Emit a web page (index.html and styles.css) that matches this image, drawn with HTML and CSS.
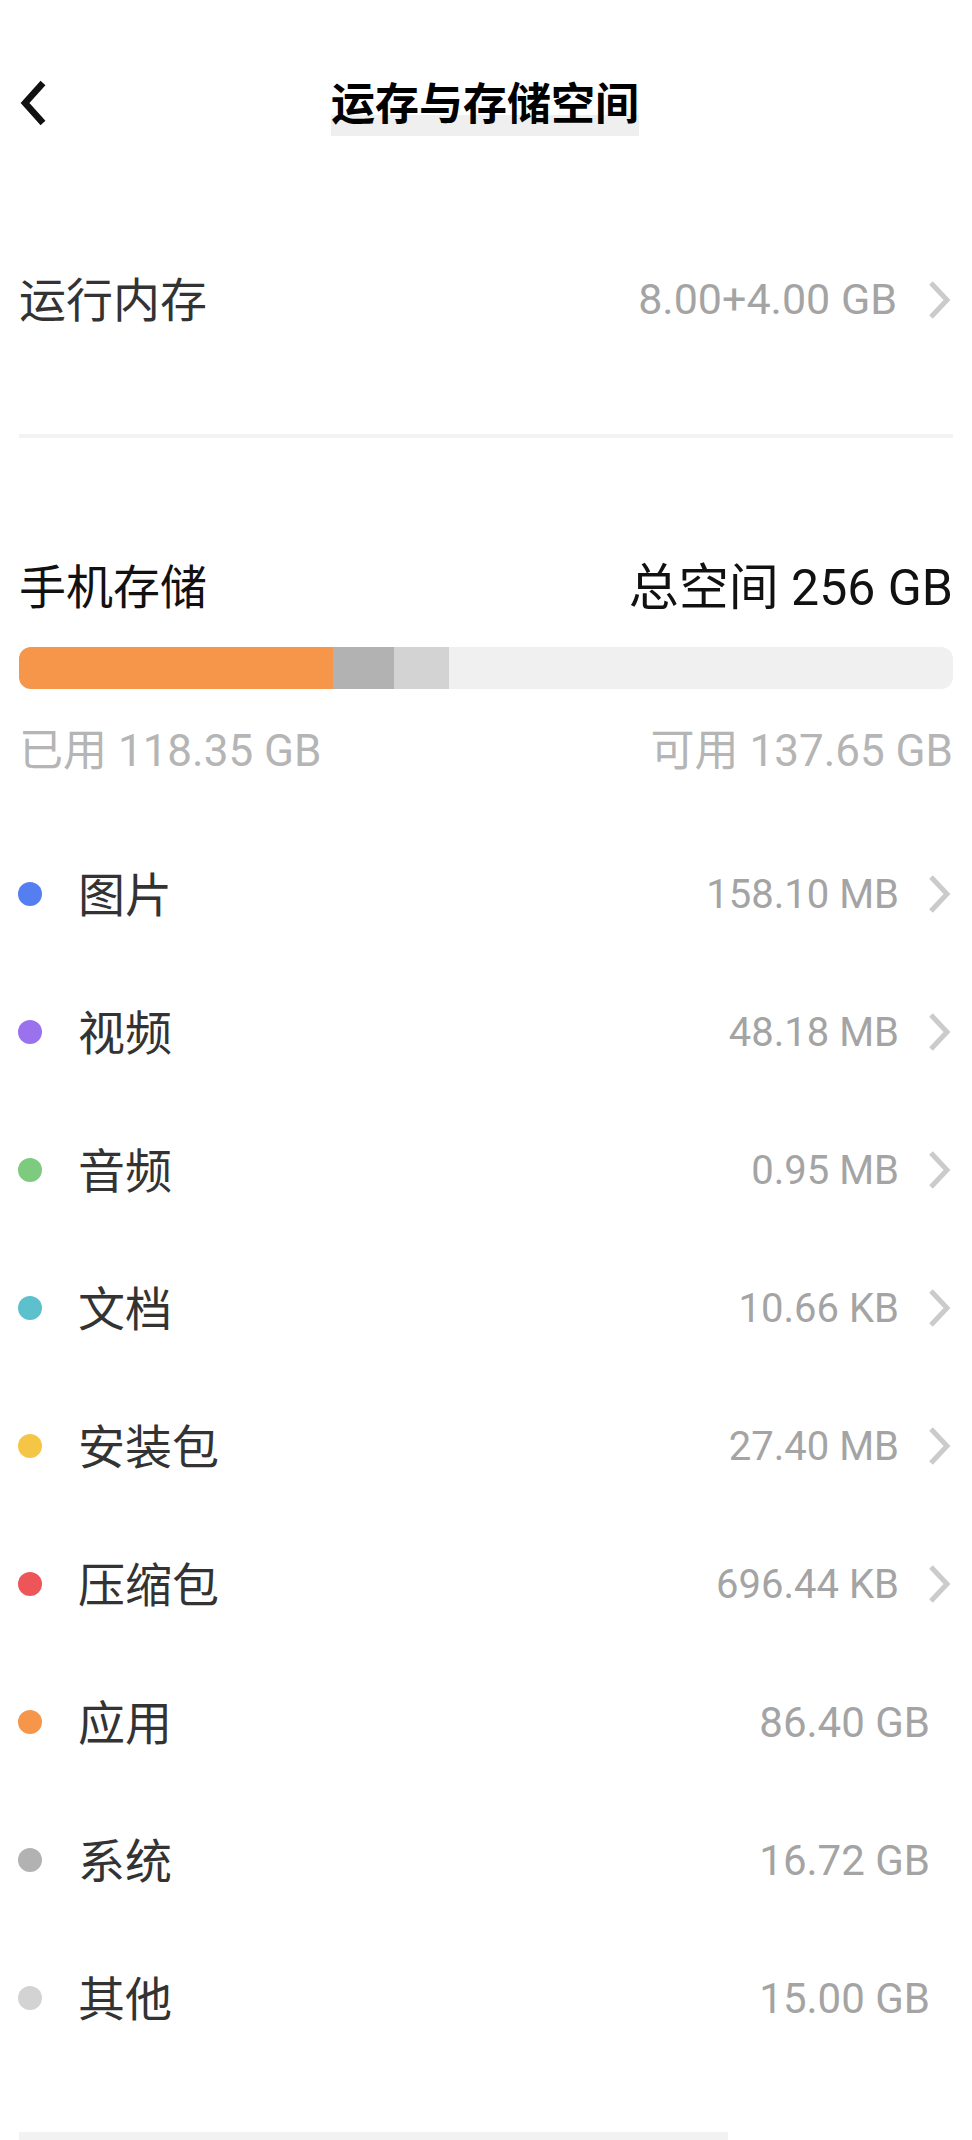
FILE: index.html
```html
<!DOCTYPE html>
<html lang="zh-CN">
  <head>
    <meta charset="utf-8" />
    <title>运存与存储空间</title>
    <link rel="stylesheet" href="styles.css">
  </head>
  <body>
    <header class="topbar">
      <a class="back" href="#">
        <svg width="32" height="48" viewBox="0 0 32 48"><path d="M26 4 L8 24 L26 44" fill="none" stroke="#111" stroke-width="6.5" /></svg>
      </a>
      <h1 class="title">运存与存储空间</h1>
      <span></span>
    </header>

    <main>
      <section class="ram">
        <div class="row">
          <span class="label">运行内存</span>
          <span class="value">8.00+4.00 GB</span>
          <svg class="arrow" width="26" height="40" viewBox="0 0 26 40"><path d="M4 3 L20 20 L4 37" fill="none" stroke="#cbcbcb" stroke-width="5" /></svg>
        </div>
      </section>
      <div class="divider"></div>

      <section class="storage">
        <div class="storage-head">
          <span>手机存储</span>
          <span class="total">总空间 256 GB</span>
        </div>
        <div class="bar">
          <div class="seg app" style="width: 33.6%"></div>
          <div class="seg sys" style="width: 6.6%"></div>
          <div class="seg other" style="width: 5.8%"></div>
        </div>
        <div class="usage">
          <span>已用 118.35 GB</span>
          <span>可用 137.65 GB</span>
        </div>
      </section>

      <ul class="list">
        <li><i class="dot blue"></i><span class="label">图片</span><span class="value">158.10 MB</span>
          <svg class="arrow" width="26" height="40" viewBox="0 0 26 40"><path d="M4 3 L20 20 L4 37" fill="none" stroke="#cbcbcb" stroke-width="5" /></svg></li>
        <li><i class="dot purple"></i><span class="label">视频</span><span class="value">48.18 MB</span>
          <svg class="arrow" width="26" height="40" viewBox="0 0 26 40"><path d="M4 3 L20 20 L4 37" fill="none" stroke="#cbcbcb" stroke-width="5" /></svg></li>
        <li><i class="dot green"></i><span class="label">音频</span><span class="value">0.95 MB</span>
          <svg class="arrow" width="26" height="40" viewBox="0 0 26 40"><path d="M4 3 L20 20 L4 37" fill="none" stroke="#cbcbcb" stroke-width="5" /></svg></li>
        <li><i class="dot teal"></i><span class="label">文档</span><span class="value">10.66 KB</span>
          <svg class="arrow" width="26" height="40" viewBox="0 0 26 40"><path d="M4 3 L20 20 L4 37" fill="none" stroke="#cbcbcb" stroke-width="5" /></svg></li>
        <li><i class="dot yellow"></i><span class="label">安装包</span><span class="value">27.40 MB</span>
          <svg class="arrow" width="26" height="40" viewBox="0 0 26 40"><path d="M4 3 L20 20 L4 37" fill="none" stroke="#cbcbcb" stroke-width="5" /></svg></li>
        <li><i class="dot red"></i><span class="label">压缩包</span><span class="value">696.44 KB</span>
          <svg class="arrow" width="26" height="40" viewBox="0 0 26 40"><path d="M4 3 L20 20 L4 37" fill="none" stroke="#cbcbcb" stroke-width="5" /></svg></li>
        <li class="plain"><i class="dot orange"></i><span class="label">应用</span><span class="value">86.40 GB</span></li>
        <li class="plain"><i class="dot grey"></i><span class="label">系统</span><span class="value">16.72 GB</span></li>
        <li class="plain"><i class="dot light"></i><span class="label">其他</span><span class="value">15.00 GB</span></li>
      </ul>

      <div class="bottom-bar"></div>
    </main>
  </body>
</html>
```

FILE: styles.css
```css
html,
body {
  margin: 0;
  padding: 0;
  background: #fff;
  font-family: "Noto Sans CJK SC", sans-serif;
  color: #333;
}
ul {
  list-style: none;
  margin: 0;
  padding: 0;
}
.topbar {
  display: grid;
  grid-template-columns: 1fr auto 1fr;
  align-items: center;
  height: 206px;
  padding: 0 19px 0 17px;
}
.back {
  display: flex;
  align-items: center;
}
.title {
  display: inline-block;
  margin: 6px 0 0 0;
  padding-bottom: 10px;
  font-size: 44px;
  line-height: 50px;
  font-weight: 700;
  color: #000;
  background: linear-gradient(to bottom, transparent 0, transparent 39px, #efefef 39px);
}
.row {
  display: flex;
  align-items: center;
  box-sizing: border-box;
  height: 188px;
  padding: 0 19px 8px;
}
.label {
  font-size: 47px;
  color: #333;
}
.value {
  margin-left: auto;
  margin-top: 6px;
  font-family: Roboto, "Noto Sans CJK SC", sans-serif;
  font-size: 40px;
  color: #a4a4a4;
}
.row .value {
  font-size: 43px;
}
.arrow {
  margin-left: 30px;
}
.row .arrow {
  margin-top: 8px;
}
.divider {
  height: 4px;
  margin: 40px 19px 0;
  background: #f3f3f3;
}
.storage {
  padding: 0 19px;
}
.storage-head {
  display: flex;
  justify-content: space-between;
  align-items: center;
  height: 60px;
  margin-top: 115px;
  padding-bottom: 4px;
  font-size: 47px;
  color: #111;
}
.total {
  font-family: Roboto, "Noto Sans CJK SC", sans-serif;
  font-size: 50px;
}
.bar {
  display: flex;
  height: 42px;
  margin-top: 30px;
  border-radius: 12px;
  overflow: hidden;
  background: #f0f0f0;
}
.seg.app {
  background: #f5964a;
}
.seg.sys {
  background: #b2b2b2;
}
.seg.other {
  background: #d3d3d3;
}
.usage {
  display: flex;
  justify-content: space-between;
  align-items: center;
  height: 60px;
  margin-top: 28px;
  padding-bottom: 3px;
  font-family: Roboto, "Noto Sans CJK SC", sans-serif;
  font-size: 44px;
  color: #b5b5b5;
}
.list {
  margin-top: 45px;
  padding: 0 19px 0 18px;
}
.list li {
  display: flex;
  align-items: center;
  box-sizing: border-box;
  height: 138px;
  padding-bottom: 5px;
}
.list li .arrow {
  margin-left: 28px;
  margin-top: 5px;
}
.list li .dot {
  margin-top: 5px;
}
.list li.plain .value {
  padding-right: 23px;
  font-size: 42px;
}
.dot {
  width: 24px;
  height: 24px;
  margin-right: 36px;
  border-radius: 50%;
}
.blue { background: #557ef0; }
.purple { background: #9a72ee; }
.green { background: #7dcb7f; }
.teal { background: #5cc1cc; }
.yellow { background: #f5c545; }
.red { background: #ee5558; }
.orange { background: #f5964a; }
.grey { background: #b2b2b2; }
.light { background: #d3d3d3; }
.bottom-bar {
  width: 709px;
  height: 8px;
  margin: 65px 0 0 19px;
  background: #f2f2f2;
}
```
